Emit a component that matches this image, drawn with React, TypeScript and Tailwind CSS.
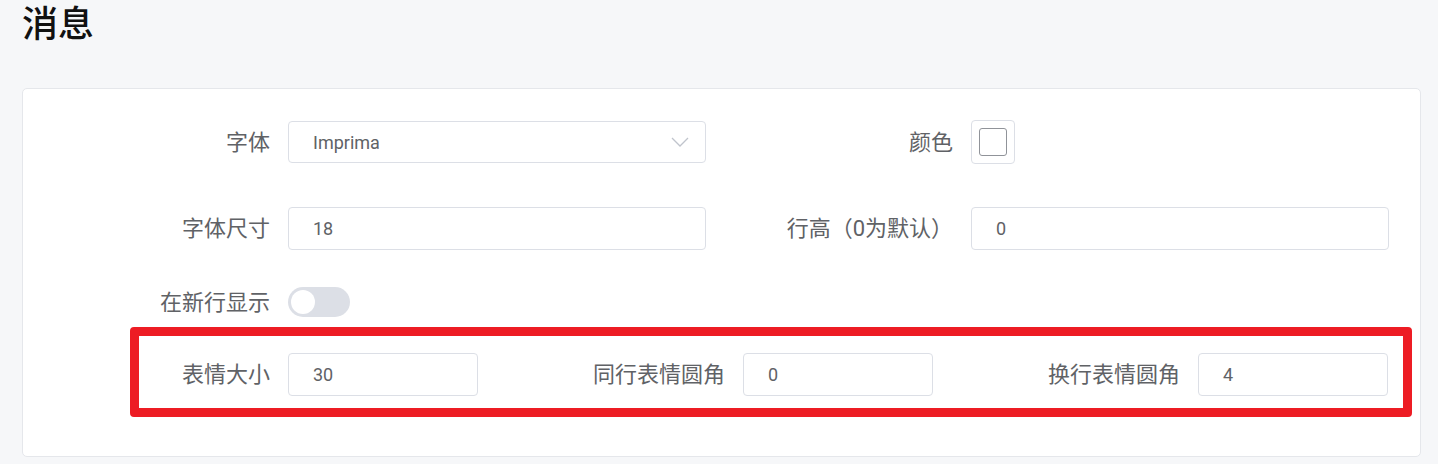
import React from 'react';

const font = { fontFamily: 'Roboto, "Noto Sans CJK SC", sans-serif' };

type FieldProps = {
  label: string;
  children: React.ReactNode;
};

const Field: React.FC<FieldProps> = ({ label, children }) => (
  <div className="flex items-center">
    <label className="w-[234px] shrink-0 pr-[18px] text-right text-[22px] text-[#606266]">
      {label}
    </label>
    {children}
  </div>
);

const TextInput: React.FC<{ value: string; width: string }> = ({ value, width }) => (
  <div
    className={`flex h-[43px] ${width} items-center rounded-[4px] border border-[#dcdfe6] bg-white pl-6 text-[18px] text-[#606266]`}
  >
    {value}
  </div>
);

export default function App() {
  return (
    <div className="min-h-[464px] w-full bg-[#f6f7f9] pl-[22px] pr-[17px] pt-[1px]" style={font}>
      <h1 className="h-[87px] text-[36px] font-medium leading-[48px] text-[#111]">消息</h1>

      <div className="rounded-[5px] border border-[#e5e7eb] bg-white pl-[31px] pr-[31px] pt-[31px] pb-[60px]">
        {/* row 1 */}
        <div className="flex h-[44px] items-center gap-[31px]">
          <Field label="字体">
            <div className="flex h-[42px] w-[418px] items-center justify-between rounded-[4px] border border-[#dcdfe6] bg-white pl-6 pr-4 text-[18px] text-[#606266]">
              <span>Imprima</span>
              <svg width="18" height="10" viewBox="0 0 18 10" fill="none">
                <path d="M1 1l8 8 8-8" stroke="#c0c4cc" strokeWidth="1.3" />
              </svg>
            </div>
          </Field>
          <Field label="颜色">
            <div className="flex h-[44px] w-[44px] items-center justify-center rounded-[4px] border border-[#dcdfe6] bg-white">
              <div className="h-[28px] w-[28px] rounded-[3px] border border-[#909399] bg-white" />
            </div>
          </Field>
        </div>

        {/* row 2 */}
        <div className="mt-[42px] flex h-[44px] items-center gap-[31px]">
          <Field label="字体尺寸">
            <TextInput value="18" width="w-[418px]" />
          </Field>
          <Field label="行高（0为默认）">
            <TextInput value="0" width="w-[418px]" />
          </Field>
        </div>

        {/* row 3 */}
        <div className="mt-[30px] flex h-[44px] items-center">
          <Field label="在新行显示">
            <div className="flex h-[30px] w-[62px] items-center rounded-full bg-[#dcdfe6] px-[3px]">
              <div className="h-[24px] w-[24px] rounded-full bg-white" />
            </div>
          </Field>
        </div>

        {/* row 4 */}
        <div className="relative mt-[28px] flex h-[44px] items-center gap-[31px]">
          <Field label="表情大小">
            <TextInput value="30" width="w-[190px]" />
          </Field>
          <Field label="同行表情圆角">
            <TextInput value="0" width="w-[190px]" />
          </Field>
          <Field label="换行表情圆角">
            <TextInput value="4" width="w-[190px]" />
          </Field>
          <div className="pointer-events-none absolute left-[76px] -top-[25px] -right-[23px] -bottom-[21px] rounded-[4px] border-[9px] border-[#ed1c24]" />
        </div>
      </div>
    </div>
  );
}
